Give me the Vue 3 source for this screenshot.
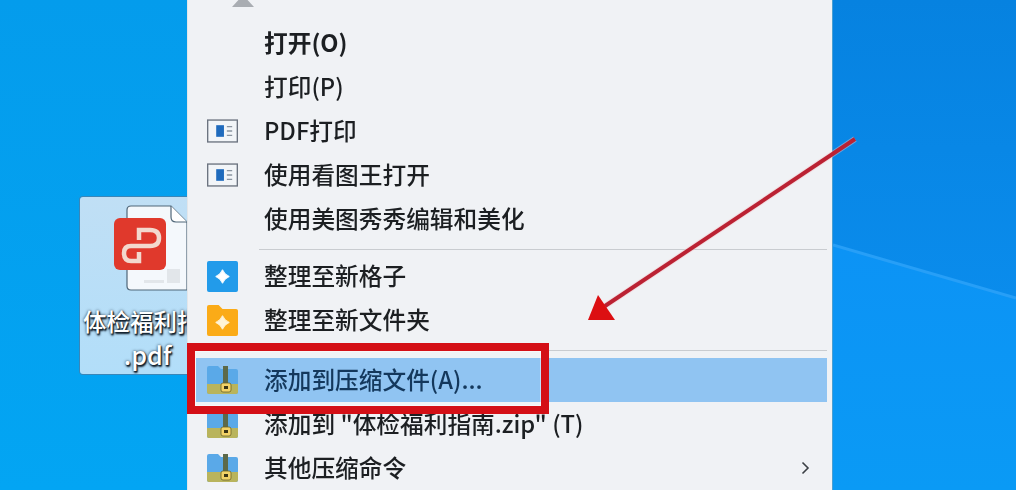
<script setup>
const topItems = [
  { label: '打开(O)', bold: true },
  { label: '打印(P)' },
  { label: 'PDF打印', icon: 'card' },
  { label: '使用看图王打开', icon: 'card' },
  { label: '使用美图秀秀编辑和美化' },
]
const midItems = [
  { label: '整理至新格子', icon: 'grid' },
  { label: '整理至新文件夹', icon: 'folder' },
]
const zipItems = [
  { label: '添加到压缩文件(A)...', icon: 'zip', active: true },
  { label: '添加到 "体检福利指南.zip" (T)', icon: 'zip' },
  { label: '其他压缩命令', icon: 'zip', more: true },
]
const groups = [topItems, midItems, zipItems]
</script>

<template>
  <div class="desktop">
    <svg class="wall" width="183" height="490" viewBox="0 0 183 490">
      <defs>
        <linearGradient id="wallTop" x1="0" y1="0" x2="0" y2="1">
          <stop offset="0" stop-color="#0682e0" />
          <stop offset="1" stop-color="#0a8cec" />
        </linearGradient>
        <linearGradient id="wallBottom" x1="0" y1="0" x2="0" y2="1">
          <stop offset="0" stop-color="#0c93f5" />
          <stop offset="1" stop-color="#0a9af5" />
        </linearGradient>
      </defs>
      <path d="M0 0 H183 V298 L0 245 Z" fill="url(#wallTop)" />
      <path d="M0 245 L183 298 V490 H0 Z" fill="url(#wallBottom)" />
      <path d="M0 245 L183 298" stroke="#279ff7" stroke-width="3" fill="none" />
    </svg>

    <div class="file">
      <svg class="file-icon" width="107" height="100" viewBox="0 0 107 100">
        <path d="M47 13 Q47 9 51 9 H91 L107 25 V93 H51 Q47 93 47 89 Z" fill="#f4f8fc" stroke="#4f6678" stroke-width="1.2" />
        <path d="M91 9 V20 Q91 25 96 25 H107" fill="#fff" stroke="#4f6678" stroke-width="1.2" />
        <rect x="87" y="72" width="13" height="14" fill="#e2e6ea" />
        <rect x="64" y="83" width="20" height="3" fill="#e2e6ea" />
        <rect x="34" y="21" width="52" height="52" rx="6" fill="#e0392c" />
        <path d="M59 43 V33 H70 Q79 33 79 41 Q79 49 70 49 H51 Q44 49 44 56 Q44 64 51 64 H59 V55" fill="none" stroke="#f3d8cd" stroke-width="4.5" />
      </svg>
      <div class="file-name">体检福利指南</div>
      <div class="file-ext">.pdf</div>
    </div>

    <div class="menu">
      <div class="scroll-up"></div>
      <template v-for="(group, i) in groups" :key="i">
        <div v-if="i" class="sep" :class="{ wide: i === 2 }"></div>
        <div
          v-for="item in group"
          :key="item.label"
          class="row"
          :class="{ active: item.active, bold: item.bold }"
        >
          <span class="icon-slot">
            <svg v-if="item.icon === 'card'" width="32" height="24" viewBox="0 0 32 24">
              <rect x="0.7" y="0.7" width="30.6" height="22.6" fill="#f2f5f8" stroke="#6c7480" stroke-width="1.4" />
              <rect x="9.5" y="6" width="8" height="12" fill="#1f6bbd" />
              <path d="M20.5 7.5 H26 M20.5 12 H26 M20.5 16.5 H26" stroke="#8b95a0" stroke-width="1.3" />
            </svg>
            <svg v-else-if="item.icon === 'grid'" width="31" height="31" viewBox="0 0 32 32">
              <rect width="32" height="32" rx="2" fill="#229bea" />
              <path d="M16 9 Q18 14 23 16 Q18 18 16 23 Q14 18 9 16 Q14 14 16 9 Z" fill="#fff" stroke="#fff" />
            </svg>
            <svg v-else-if="item.icon === 'folder'" width="31" height="31" viewBox="0 0 32 32">
              <path d="M0 2 Q0 0 2 0 H12 L16 4 H30 Q32 4 32 6 V30 Q32 32 30 32 H2 Q0 32 0 30 Z" fill="#fbab17" />
              <path d="M16 11 Q18 16 23 18 Q18 20 16 25 Q14 20 9 18 Q14 16 16 11 Z" fill="#fff4d8" stroke="#fff4d8" />
            </svg>
            <svg v-else-if="item.icon === 'zip'" width="31" height="28" viewBox="0 0 31 28">
              <path d="M0 2 Q0 0 2 0 H11 L14 3 H29 Q31 3 31 5 V26 Q31 28 29 28 H2 Q0 28 0 26 Z" fill="#5aa9e8" />
              <path d="M0 18 H31 V26 Q31 28 29 28 H2 Q0 28 0 26 Z" fill="#b9b45c" />
              <rect x="16" y="0" width="5" height="18" fill="#5c6a4a" />
              <rect x="14" y="17" width="10" height="9" rx="2" fill="#f2d266" stroke="#6b6328" stroke-width="0.8" />
              <rect x="17" y="20" width="4" height="3" fill="#3a3415" />
            </svg>
          </span>
          <span class="label">{{ item.label }}</span>
          <svg v-if="item.more" class="chevron" width="9" height="14" viewBox="0 0 9 14">
            <path d="M1.5 1.5 L7 7 L1.5 12.5" fill="none" stroke="#3b3f45" stroke-width="1.6" />
          </svg>
        </div>
      </template>
    </div>

    <div class="callout"></div>
    <svg class="arrow" width="1016" height="490" viewBox="0 0 1016 490">
      <path d="M855 139 L605 306" stroke="#f3c8cc" stroke-width="6" fill="none" opacity="0.45" />
      <path d="M855 139 L605 306" stroke="#bb2233" stroke-width="4" fill="none" />
      <path d="M598 295 L615 320 L588 320 Z" fill="#dc0f12" />
    </svg>
  </div>
</template>

<style>
html,
body {
  margin: 0;
  overflow: hidden;
}
</style>

<style scoped>
.desktop {
  position: relative;
  width: 1016px;
  height: 490px;
  overflow: hidden;
  background: linear-gradient(180deg, #049cec 0%, #03a5f3 100%);
  font-family: "Noto Sans CJK SC", "Liberation Sans", sans-serif;
}
.wall {
  position: absolute;
  left: 833px;
  top: 0;
}
.file {
  position: absolute;
  left: 80px;
  top: 197px;
  width: 107px;
  height: 177px;
  box-sizing: border-box;
  border-radius: 3px 0 0 3px;
  background: linear-gradient(180deg, #c0dff5 0%, #b2def9 100%);
  box-shadow: 0 0 0 1px #3a86b8;
  overflow: hidden;
  color: #fff;
  text-align: center;
  font-size: 23.5px;
  font-weight: 500;
  line-height: 32px;
  text-shadow: 1px 1px 1px #14222f, 1px 2px 2px #14222f, 0 0 3px #2a3a4a;
}
.file-icon {
  display: block;
}
.file-name {
  width: 140px;
  margin-top: 8px;
  padding-left: 3px;
  white-space: nowrap;
  text-align: left;
}
.file-ext {
  padding-left: 28px;
  margin-top: 1px;
  font-size: 25px;
}
.menu {
  position: absolute;
  left: 187px;
  top: 0;
  width: 646px;
  height: 490px;
  padding: 21px 5px 0 8px;
  box-sizing: border-box;
  background: #f0f2f5;
  border-left: 1px solid #e3e6e9;
  border-right: 1px solid #4a9fd2;
  overflow: hidden;
}
.scroll-up {
  position: absolute;
  left: 44px;
  top: -5px;
  width: 0;
  height: 0;
  border-left: 11px solid transparent;
  border-right: 11px solid transparent;
  border-bottom: 12px solid #a9adb2;
}
.row {
  display: flex;
  align-items: center;
  height: 44px;
  color: #1c1f22;
  font-size: 23.7px;
  font-weight: 500;
}
.row.bold {
  font-weight: 700;
}
.row.active {
  background: #90c4f2;
  color: #14385c;
}
.label {
  flex: 1;
  padding-bottom: 2px;
  white-space: pre;
  filter: blur(0.5px);
}
.icon-slot {
  display: flex;
  justify-content: center;
  width: 31px;
  margin: 0 26px 0 11px;
}
.chevron {
  margin-right: 17px;
}
.sep {
  height: 1px;
  margin: 8px 0 4px 63px;
  background: #c9ccd0;
}
.sep.wide {
  margin-bottom: 7px;
}
.callout {
  position: absolute;
  left: 187px;
  top: 343px;
  width: 362px;
  height: 71px;
  box-sizing: border-box;
  border: 8px solid #d40f16;
  box-shadow: inset 0 0 0 1px rgba(255, 255, 255, 0.45);
}
.arrow {
  position: absolute;
  left: 0;
  top: 0;
}
</style>
